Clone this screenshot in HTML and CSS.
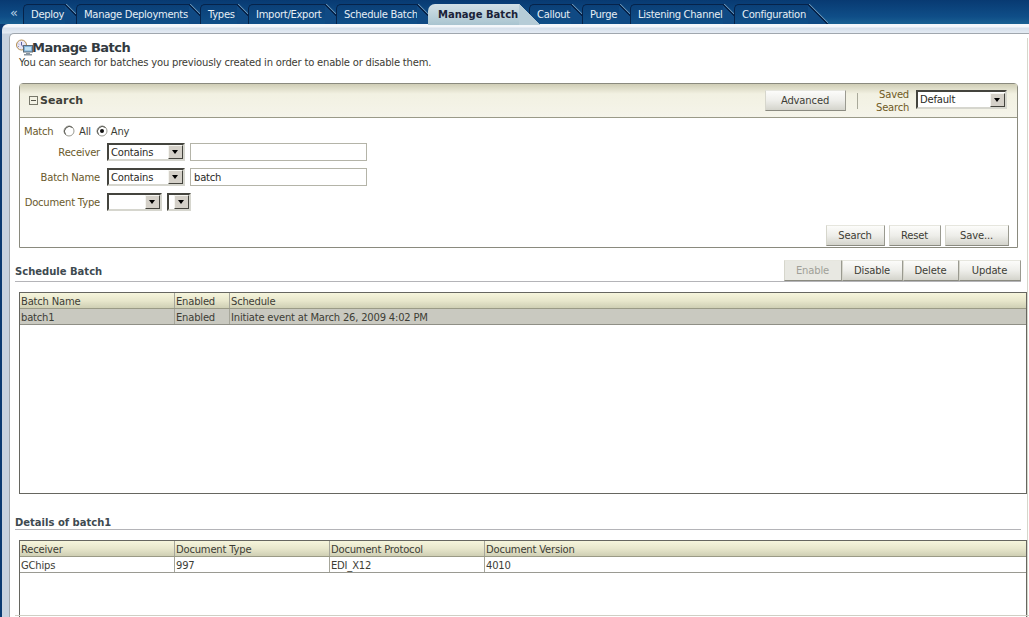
FILE: index.html
```html
<!DOCTYPE html>
<html lang="en">
<head>
<meta charset="utf-8">
<title>Manage Batch</title>
<link rel="stylesheet" href="styles.css">
</head>
<body>
<div class="page">
  <nav class="topbar">
    <span class="collapse">«</span>
    <a class="tab">Deploy</a>
    <a class="tab">Manage Deployments</a>
    <a class="tab">Types</a>
    <a class="tab">Import/Export</a>
    <a class="tab">Schedule Batch</a>
    <a class="tab active">Manage Batch</a>
    <a class="tab">Callout</a>
    <a class="tab">Purge</a>
    <a class="tab">Listening Channel</a>
    <a class="tab">Configuration</a>
  </nav>
  <div class="outer">
    <main class="panel">
      <header class="title-row">
        <svg class="page-icon" width="19" height="17" viewBox="0 0 19 17">
          <circle cx="6.500" cy="6" r="5" fill="#e9e6f4" stroke="#b58f4e"/>
          <path d="M6.500 3v3.200l2 1.500" fill="none" stroke="#5a62a0"/>
          <path d="M3 4.500l1 1M3 7.500h1" stroke="#8f94c0"/>
          <rect x="8.500" y="6.500" width="9" height="6.500" fill="#7fb0d8" stroke="#5c6c78"/>
          <rect x="10" y="8" width="6" height="3.500" fill="#bfe0f2"/>
          <path d="M11 14h4v1h2v1.500H9V15h2z" fill="#8a96a0"/>
        </svg>
        <h1>Manage Batch</h1>
      </header>
      <p class="intro">You can search for batches you previously created in order to enable or disable them.</p>

      <section class="search">
        <div class="search-head">
          <svg class="minus" width="9" height="9" viewBox="0 0 9 9"><rect x=".5" y=".5" width="8" height="8" fill="none" stroke="#77776a"/><path d="M2 4.500h5" stroke="#55554a"/></svg>
          <h2>Search</h2>
          <button class="btn advanced">Advanced</button>
          <span class="sep"></span>
          <span class="saved">Saved<br>Search</span>
          <div class="combo saved-combo"><span class="combo-text">Default</span><span class="arrow"></span></div>
        </div>
        <div class="search-body">
          <div class="match"><span class="lbl">Match</span>
            <svg class="radio r1" width="12" height="12" viewBox="0 0 12 12"><circle cx="6" cy="6" r="5" fill="#fff" stroke="#9a9a92"/><path d="M2.500 9.500a5 5 0 0 1 7-7" fill="none" stroke="#55554f"/></svg><span>All</span>
            <svg class="radio r2" width="12" height="12" viewBox="0 0 12 12"><circle cx="6" cy="6" r="5" fill="#fff" stroke="#9a9a92"/><path d="M2.500 9.500a5 5 0 0 1 7-7" fill="none" stroke="#55554f"/><circle cx="6" cy="6" r="2" fill="#111"/></svg><span>Any</span>
          </div>
          <div class="field f-receiver"><label>Receiver</label>
            <div class="combo w78"><span class="combo-text">Contains</span><span class="arrow"></span></div>
            <div class="text-input"></div></div>
          <div class="field f-batch"><label>Batch Name</label>
            <div class="combo w78"><span class="combo-text">Contains</span><span class="arrow"></span></div>
            <div class="text-input">batch</div></div>
          <div class="field f-doc"><label>Document Type</label>
            <div class="combo w55"><span class="combo-text"></span><span class="arrow"></span></div>
            <div class="combo w24"><span class="combo-text"></span><span class="arrow"></span></div></div>
          <div class="actions">
            <button class="btn b-search">Search</button>
            <button class="btn b-reset">Reset</button>
            <button class="btn b-save">Save...</button>
          </div>
        </div>
      </section>

      <div class="sec-head first">
        <h3>Schedule Batch</h3>
        <div class="toolbar">
          <button class="btn tb disabled w58">Enable</button>
          <button class="btn tb w60">Disable</button>
          <button class="btn tb w56">Delete</button>
          <button class="btn tb w62">Update</button>
        </div>
      </div>
      <div class="grid-box schedule">
        <div class="row head cols-a"><span>Batch Name</span><span>Enabled</span><span>Schedule</span></div>
        <div class="row selected cols-a"><span>batch1</span><span>Enabled</span><span>Initiate event at March 26, 2009 4:02 PM</span></div>
      </div>

      <div class="sec-head second"><h3>Details of batch1</h3></div>
      <div class="grid-box details">
        <div class="row head cols-b"><span>Receiver</span><span>Document Type</span><span>Document Protocol</span><span>Document Version</span></div>
        <div class="row plain cols-b"><span>GChips</span><span>997</span><span>EDI_X12</span><span>4010</span></div>
      </div>
    </main>
  </div>
</div>
</body>
</html>
```
FILE: styles.css
```css
* { box-sizing: border-box; }
html, body { margin: 0; padding: 0; }
body { font-family: "DejaVu Sans", Verdana, sans-serif; font-size: 10px; letter-spacing: -.2px; color: #3d3d35; background: #fff; }
.page { width: 1029px; height: 617px; overflow: hidden; background: #0a3a72; }

.topbar { height: 24px; display: grid; grid-template-columns: 23px 53px 124px 48px 88px 92px 101px 53px 48px 104px 85px; padding-top: 4px; background: linear-gradient(#083a72, #0f4e88 70%, #1a6193); }
.collapse { padding: 0 0 0 10px; color: #b8d0e4; font-size: 13px; line-height: 18px; }
.tab { position: relative; height: 20px; margin-right: 11px; padding: 0 0 0 7px; color: #e6eef5; letter-spacing: -.3px; line-height: 20px; white-space: nowrap; background: linear-gradient(#0b4078, #104f88); border-left: 1px solid #06234a; border-top: 1px solid #06234a; border-top-left-radius: 5px; }
.tab::after { content: ""; position: absolute; left: 100%; top: -1px; width: 20px; height: 20px; background: linear-gradient(to top right, #104a84 47%, #06234a 47%, #06234a 52%, #6f98b8 52%, transparent 56%); }
.tab.active { z-index: 2; padding-left: 10px; margin-right: 10px; height: 21px; color: #1a2238; font-weight: bold; letter-spacing: 0; background: linear-gradient(#d2e0e6, #a9c4d0); border: 0; border-top-left-radius: 7px; line-height: 21px; }
.tab.active::after { top: 0; width: 21px; height: 21px; background: linear-gradient(to top right, #b6ccd7 50%, transparent 51%); }

.outer { height: 593px; margin-left: 2px; padding: 3px 0 0 7px; background: linear-gradient(#f4f7fb 0, #f4f7fb 3px, #d5dfeb 4px, #e4ebf3 9px, #c8d3e0 10px); border-top-left-radius: 6px; }
.panel { position: relative; height: 584px; background: #fff; border-left: 1px solid #a0a7ae; border-top: 1px solid #a0a7ae; border-top-left-radius: 5px; padding: 4px 0 0 5px; margin-top: 6px; overflow: hidden; }
.panel::before { content: ""; position: absolute; right: 1px; top: 4px; bottom: 0; width: 1px; background: #d6d6ca; }
.panel::after { content: ""; position: absolute; left: 5px; right: 0; bottom: 1px; height: 1px; background: #cfcfc4; }

.title-row { display: flex; align-items: center; height: 18px; }
.page-icon { flex: none; margin-right: -2px; }
h1 { margin: 2px 0 0; font-size: 13px; letter-spacing: -.5px; line-height: 18px; font-weight: bold; color: #333a3f; }
.intro { margin: 1px 0 0 4px; line-height: 12px; height: 12px; color: #3c3c34; }

.search { width: 999px; height: 165px; margin: 14px 0 0 4px; border: 1px solid #8a8a7e; border-radius: 4px 4px 0 0; }
.search-head { height: 34px; display: flex; align-items: center; padding-left: 9px; background: linear-gradient(#cfcdb5, #f2f1e2 30%, #f5f4ea); border-bottom: 1px solid #9a9a88; }
.minus { flex: none; margin-right: 2px; }
h2 { margin: 0; font-size: 11px; letter-spacing: .1px; font-weight: bold; color: #3e4038; flex: 1; }
.btn { font: 10px "DejaVu Sans", Verdana, sans-serif; letter-spacing: -.15px; color: #3d3d35; height: 21px; padding: 0 1px 0 0; border: 1px solid; border-color: #e6e6de #9a9a90 #8a8a80 #d6d6cc; background: linear-gradient(#fcfcfa, #eeeeea 50%, #d4d4cc); }
.advanced { width: 81px; }
.sep { width: 1px; height: 16px; background: #a9a99a; margin: 0 18px 0 11px; }
.saved { width: 33px; text-align: right; line-height: 13px; color: #6f5a1e; margin-right: 7px; white-space: nowrap; display: block; }

.combo { display: flex; align-items: center; height: 18px; border: 2px solid; border-color: #44443e #d6d6ce #d6d6ce #44443e; background: #fff; flex: none; color: #2a2a26; }
.combo-text { flex: 1; padding-left: 2px; line-height: 15px; white-space: nowrap; overflow: hidden; }
.arrow { flex: none; width: 15px; height: 14px; background: #d4d0c8; border: 1px solid; border-color: #f5f5f0 #44443e #44443e #f5f5f0; position: relative; }
.arrow::after { content: ""; position: absolute; left: 3px; top: 4px; border: 3.500px solid transparent; border-top: 4px solid #000; border-bottom: 0; }
.saved-combo { width: 91px; height: 19px; margin: -2px 10px 0 0; }
.w78 { width: 78px; }
.w55 { width: 55px; }
.w24 { width: 24px; }

.search-body { padding: 6px 0 0 4px; height: 130px; }
.match { display: flex; align-items: center; height: 14px; }
.lbl { color: #6a5a2c; width: 39px; }
.radio { flex: none; }
.r1 { margin-right: 4px; }
.r2 { margin: -1px 3px 0 5px; }
.field { display: flex; align-items: center; height: 18px; }
.field label { width: 76px; text-align: right; margin-right: 7px; color: #6a5a2c; white-space: nowrap; }
.f-receiver { margin-top: 5px; }
.f-batch { margin-top: 7px; }
.f-doc { margin-top: 7px; }
.field .combo + * { margin-left: 5px; }
.text-input { width: 177px; height: 18px; border: 1px solid #b4b4a8; background: #fff; padding-left: 3px; line-height: 17px; color: #2a2a26; }
.actions { display: flex; justify-content: flex-end; gap: 4px; margin-top: 14px; padding-right: 8px; }
.b-search { width: 59px; }
.b-reset { width: 52px; }
.b-save { width: 64px; }

.sec-head { width: 1006px; display: flex; align-items: flex-end; justify-content: space-between; border-bottom: 1px solid #b4b4b8; }
.sec-head.first { height: 23px; margin-top: 11px; }
.sec-head.second { height: 15px; margin-top: 21px; }
h3 { margin: 0 0 2px; font-size: 10px; letter-spacing: 0; font-weight: bold; color: #3e4a50; line-height: 14px; }
.second h3 { margin-bottom: -1px; }
.toolbar { display: flex; }
.tb { height: 21px; }
.disabled { color: #a0a098; background: #e8e8e2; }
.w58 { width: 58px; }
.w60 { width: 61px; }
.w56 { width: 56px; }
.w62 { width: 62px; }

.grid-box { width: 1008px; margin-left: 4px; border: 1px solid #666660; }
.schedule { height: 202px; margin-top: 10px; }
.details { height: 90px; margin-top: 10px; }
.row { display: grid; height: 16px; line-height: 17px; color: #3d3d35; }
.row span { padding-left: 1px; border-right: 1px solid #a6a69a; white-space: nowrap; overflow: hidden; }
.row span:last-child { border-right: 0; }
.cols-a { grid-template-columns: 155px 55px 1fr; }
.cols-b { grid-template-columns: 155px 155px 155px 1fr; }
.head { background: linear-gradient(#f6f5dc, #e8e7cc 50%, #cfcfb4); border-bottom: 1px solid #9a9a86; }
.selected { background: #c9c9c0; border-bottom: 1px solid #8f8f86; }
.plain { background: #fff; border-bottom: 1px solid #9a9a92; }
```
